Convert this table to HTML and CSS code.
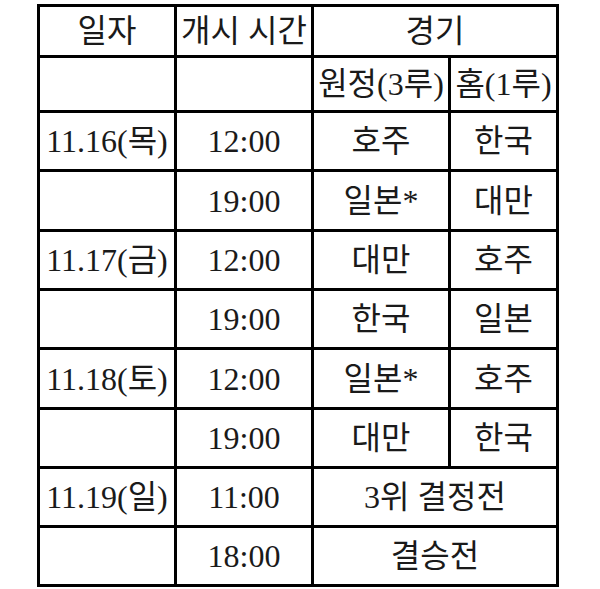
FILE: index.html
```html
<!DOCTYPE html>
<html lang="ko">
<head>
<meta charset="utf-8">
<title>일정</title>
<link rel="stylesheet" href="styles.css">
</head>
<body>
<div class="sheet">
  <div class="cell">일자</div>
  <div class="cell">개시 시간</div>
  <div class="cell span2">경기</div>

  <div class="cell"></div>
  <div class="cell"></div>
  <div class="cell">원정(3루)</div>
  <div class="cell">홈(1루)</div>

  <div class="cell">11.16(목)</div>
  <div class="cell">12:00</div>
  <div class="cell">호주</div>
  <div class="cell">한국</div>

  <div class="cell"></div>
  <div class="cell">19:00</div>
  <div class="cell">일본*</div>
  <div class="cell">대만</div>

  <div class="cell">11.17(금)</div>
  <div class="cell">12:00</div>
  <div class="cell">대만</div>
  <div class="cell">호주</div>

  <div class="cell"></div>
  <div class="cell">19:00</div>
  <div class="cell">한국</div>
  <div class="cell">일본</div>

  <div class="cell">11.18(토)</div>
  <div class="cell">12:00</div>
  <div class="cell">일본*</div>
  <div class="cell">호주</div>

  <div class="cell"></div>
  <div class="cell">19:00</div>
  <div class="cell">대만</div>
  <div class="cell">한국</div>

  <div class="cell">11.19(일)</div>
  <div class="cell">11:00</div>
  <div class="cell span2">3위 결정전</div>

  <div class="cell"></div>
  <div class="cell">18:00</div>
  <div class="cell span2">결승전</div>
</div>
</body>
</html>
```
FILE: styles.css
```css
html, body {
  margin: 0;
  padding: 0;
  background: #fff;
}

body {
  padding: 4px 0 0 37px;
}

.sheet {
  display: grid;
  grid-template-columns: 134px 134px 134px 105px;
  grid-template-rows: 48px 52px 56px 57px 56px 56px 57px 56px 56px 56px;
  gap: 3px;
  padding: 3px;
  width: max-content;
  background: #000;
}

.cell {
  background: #fff;
  display: flex;
  align-items: center;
  justify-content: center;
  white-space: nowrap;
  font-family: "Liberation Serif", "Noto Sans CJK KR", serif;
  font-size: 32px;
  color: #1a1a1a;
  line-height: 1;
}

.span2 {
  grid-column: span 2;
}
```
